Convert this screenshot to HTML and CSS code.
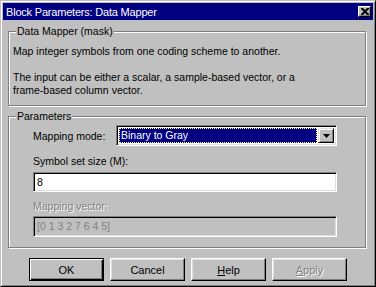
FILE: index.html
```html
<!DOCTYPE html>
<html lang="en">
<head>
  <meta charset="UTF-8">
  <title>Block Parameters: Data Mapper</title>
  <link rel="stylesheet" href="styles.css">
</head>
<body>
  <div class="window">
    <div class="titlebar">
      <span class="title">Block Parameters: Data Mapper</span>
      <button class="close-btn" type="button">
        <svg width="8" height="7" viewBox="0 0 8 7"><path d="M0 0h2l2 2 2-2h2v1l-2.5 2.5L8 6v1H6L4 5 2 7H0V6l2.5-2.5L0 1z" fill="#000"/></svg>
      </button>
    </div>
    <div class="content">
      <fieldset class="group mask">
        <legend>Data Mapper (mask)</legend>
        <p>Map integer symbols from one coding scheme to another.</p>
        <p class="gap">The input can be either a scalar, a sample-based vector, or a<br>frame-based column vector.</p>
      </fieldset>
      <fieldset class="group params">
        <legend>Parameters</legend>
        <div class="row">
          <label class="row-label">Mapping mode:</label>
          <div class="combo">
            <div class="combo-value"><span>Binary to Gray</span></div>
            <div class="combo-arrow">
              <svg width="7" height="4" viewBox="0 0 7 4"><path d="M0 0h7L3.5 4z" fill="#000"/></svg>
            </div>
          </div>
        </div>
        <label class="field-label">Symbol set size (M):</label>
        <div class="edit">8</div>
        <label class="field-label disabled">Mapping vector:</label>
        <div class="edit edit-disabled">[0 1 3 2 7 6 4 5]</div>
      </fieldset>
      <div class="buttons">
        <button class="btn btn-default" type="button">OK</button>
        <button class="btn" type="button">Cancel</button>
        <button class="btn" type="button"><u>H</u>elp</button>
        <button class="btn btn-disabled" type="button" disabled><u>A</u>pply</button>
      </div>
    </div>
  </div>
</body>
</html>
```

FILE: styles.css
```css
body {
  margin: 0;
  font-family: "Liberation Sans", Arial, sans-serif;
  font-size: 10.5px;
  color: #000;
}
.window {
  width: 376px;
  height: 287px;
  box-sizing: border-box;
  background: #c0c0c0;
  border: 1px solid;
  border-color: #c0c0c0 #000 #000 #c0c0c0;
  box-shadow: inset 1px 1px #fff, inset -1px -1px #808080;
  padding: 2px;
}
.titlebar {
  height: 17px;
  background: #000080;
  color: #fff;
  display: flex;
  align-items: center;
  justify-content: space-between;
  padding: 0 2px 0 3px;
  font-size: 11px;
  letter-spacing: -0.2px;
}
.close-btn {
  width: 13px;
  height: 11px;
  padding: 0;
  display: flex;
  align-items: center;
  justify-content: center;
  background: #c0c0c0;
  border: 1px solid;
  border-color: #fff #000 #000 #fff;
  box-shadow: inset -1px -1px #808080;
}
.content {
  padding: 0 0 0 5px;
}
.group {
  width: 358px;
  box-sizing: border-box;
  margin: 5px 0 0 0;
  padding: 7px 8px 8px 24px;
  border: 1px solid #808080;
  box-shadow: inset 1px 1px #fff, 1px 1px #fff;
  min-inline-size: 0;
}
.group legend {
  padding: 0 1px;
  margin-left: -17px;
  line-height: 13px;
  background: #c0c0c0;
}
.mask {
  padding-left: 4px;
}
.mask legend {
  margin-left: 3px;
}
.group p {
  margin: 0;
  line-height: 13px;
}
.group p.gap {
  margin-top: 13px;
}
.params {
  margin-top: 4px;
  padding-top: 2px;
  padding-bottom: 10px;
}
.row {
  display: flex;
  align-items: center;
}
.row-label {
  width: 83px;
}
.combo {
  width: 221px;
  height: 21px;
  box-sizing: border-box;
  display: flex;
  padding: 2px;
  background: #fff;
  border: 1px solid;
  border-color: #808080 #fff #fff #808080;
  box-shadow: inset 1px 1px #000, inset -1px -1px #dfdfdf;
}
.combo-value {
  flex: 1;
  margin-right: 1px;
  background: #000080;
  color: #fff;
  border: 1px dotted #ffff80;
  padding-left: 1px;
  line-height: 13px;
}
.combo-arrow {
  width: 16px;
  box-sizing: border-box;
  display: flex;
  align-items: center;
  justify-content: center;
  background: #c0c0c0;
  border: 1px solid;
  border-color: #dfdfdf #000 #000 #dfdfdf;
  box-shadow: inset 1px 1px #fff, inset -1px -1px #808080;
}
.field-label {
  display: block;
  margin-top: 9px;
  line-height: 13px;
}
.field-label.disabled {
  margin-top: 8px;
  color: #808080;
  text-shadow: 1px 1px #fff;
}
.edit {
  width: 304px;
  height: 20px;
  box-sizing: border-box;
  margin-top: 4px;
  padding: 2px 3px;
  line-height: 14px;
  background: #fff;
  border: 1px solid;
  border-color: #808080 #fff #fff #808080;
  box-shadow: inset 1px 1px #000, inset -1px -1px #dfdfdf;
}
.edit-disabled {
  height: 21px;
  margin-top: 3px;
  background: #c0c0c0;
  color: #808080;
}
.buttons {
  display: flex;
  gap: 6px;
  margin: 10px 0 0 21px;
}
.btn {
  width: 75px;
  height: 23px;
  padding: 0;
  font-family: "Liberation Sans", Arial, sans-serif;
  font-size: 11px;
  color: #000;
  background: #c0c0c0;
  border: 1px solid;
  border-color: #fff #000 #000 #fff;
  box-shadow: inset -1px -1px #808080, inset 1px 1px #dfdfdf;
}
.btn-default {
  border-color: #000;
  box-shadow: inset 1px 1px #fff, inset -1px -1px #000, inset -2px -2px #808080;
}
.btn-disabled {
  color: #808080;
  text-shadow: 1px 1px #fff;
}
```
